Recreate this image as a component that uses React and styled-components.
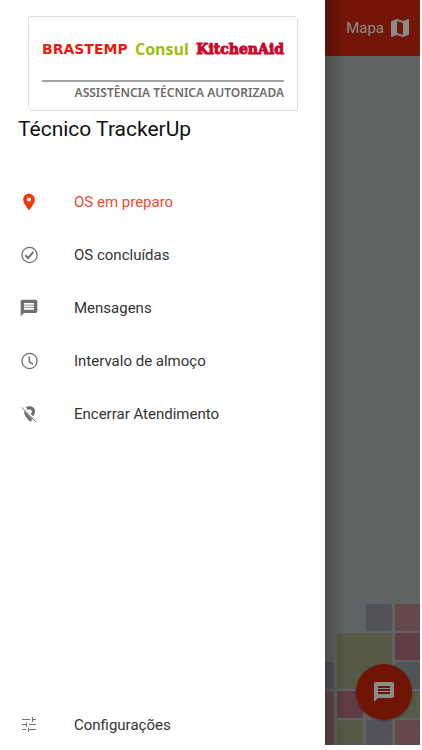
import React from "react";
import styled, { createGlobalStyle } from "styled-components";
import { MdLocationOn, MdMap, MdMessage } from "react-icons/md";

const GlobalStyle = createGlobalStyle`
  *, *::before, *::after { box-sizing: border-box; }
  body { margin: 0; background: #fff; font-family: Roboto, "Liberation Sans", sans-serif; }
`;

const Screen = styled.div`
  display: flex;
  min-height: 100vh;
  padding: 0 2px 5px 0;
  background: #fff;
`;

const Drawer = styled.aside`
  flex: 0 0 325px;
  display: flex;
  flex-direction: column;
  background: #fff;
`;

const Brands = styled.div`
  margin: 16px 27px 0 28px;
  padding: 22px 13px 8px;
  border: 1px solid #dcdcdc;
  border-radius: 2px 5px 2px 5px;
`;

const BrandRow = styled.div`
  display: flex;
  align-items: center;
  justify-content: space-between;
  height: 20px;
  white-space: nowrap;
`;

const Brastemp = styled.span`
  font: 700 14px/20px "DejaVu Sans", sans-serif;
  color: #e8190f;
`;

const Consul = styled.span`
  font: 700 16px/20px "Open Sans", sans-serif;
  color: #9abf0b;
`;

const KitchenAid = styled.span`
  font: 700 14px/20px "DejaVu Serif", serif;
  color: #c9082c;
  -webkit-text-stroke: 1px #c9082c;
`;

const Tagline = styled.p`
  margin: 21px 0 0;
  padding-top: 2px;
  border-top: 2px solid #a2a2a2;
  text-align: right;
  white-space: nowrap;
  font: 600 12px/18px "Noto Sans", sans-serif;
  color: #6c6c6c;
`;

const UserName = styled.h1`
  margin: 6px 18px 0;
  font-size: 21px;
  line-height: 24px;
  font-weight: 400;
  color: #111;
`;

const Menu = styled.nav`
  flex: 1;
  display: flex;
  flex-direction: column;
  margin-top: 34px;
`;

const MenuLink = styled.a`
  display: flex;
  align-items: center;
  gap: 35px;
  height: 53px;
  padding-left: 19px;
  font-size: 15px;
  line-height: 20px;
  text-decoration: none;
  color: ${(p) => (p.$active ? "#ee4a2c" : "#333")};

  svg {
    flex: none;
    color: ${(p) => (p.$active ? "#f5350a" : "#707070")};
  }

  &:last-child {
    margin-top: auto;
    margin-bottom: -6px;
  }
`;

const Scene = styled.main`
  position: relative;
  flex: 1;
  min-width: 0;
  display: flex;
  flex-direction: column;
  overflow: hidden;
  background: #606364;

  &::after {
    content: "";
    position: absolute;
    inset: 0;
    pointer-events: none;
    background: linear-gradient(to right, rgba(0, 0, 0, 0.24), transparent 20px);
  }
`;

const TopBar = styled.header`
  display: flex;
  justify-content: flex-end;
  height: 56px;
  padding-right: 8px;
  background: #741607;
`;

const MapButton = styled.button`
  display: flex;
  align-items: center;
  gap: 4px;
  padding: 0;
  border: 0;
  background: none;
  color: #8c8c8c;
  font: 400 15px/20px Roboto, sans-serif;
`;

const Mosaic = styled.div`
  display: grid;
  grid-template-columns: 9px 26px 26px 25px;
  grid-template-rows: 27px 27px 27px 27px 25px;
  gap: 2px 3px;
  justify-content: end;
  margin-top: auto;
`;

const Tile = styled.span`
  grid-area: ${(p) => p.$area};
  border-radius: 2px;
  background: ${(p) => p.$color};
`;

const ChatButton = styled.button`
  position: absolute;
  right: 8px;
  bottom: 25px;
  display: grid;
  place-items: center;
  width: 56px;
  height: 56px;
  padding: 0;
  border: 0;
  border-radius: 50%;
  background: #701505;
  color: #8c8c8c;
  box-shadow: 0 1px 3px rgba(0, 0, 0, 0.3);
`;

const slate = "#515358";
const olive = "#565a46";
const rose = "#64484a";
const wine = "#603c44";

const tiles = [
  ["1 / 3", slate],
  ["1 / 4", rose],
  ["2 / 2 / 4 / 4", olive],
  ["2 / 4", wine],
  ["3 / 1", slate],
  ["3 / 4", slate],
  ["4 / 1 / 6 / 2", rose],
  ["4 / 2", wine],
  ["4 / 4", olive],
  ["5 / 2", olive],
  ["5 / 3", slate],
  ["5 / 4", rose],
];

function LineIcon({ children }) {
  return (
    <svg width="20" height="20" viewBox="0 0 20 20" fill="none" stroke="currentColor" aria-hidden="true">
      {children}
    </svg>
  );
}

const CheckIcon = () => (
  <LineIcon>
    <circle cx="10.5" cy="10" r="7.6" strokeWidth="1.3" />
    <path d="M6.2 10.2 9 13l5.4-6" strokeWidth="1.9" />
  </LineIcon>
);

const ClockIcon = () => (
  <LineIcon>
    <circle cx="10.5" cy="10" r="7.6" strokeWidth="1.3" />
    <path d="M10.3 5.5v5.2l3.6 2.6" strokeWidth="1.5" />
  </LineIcon>
);

const PinOffIcon = () => (
  <LineIcon>
    <path
      d="M6.8 3.2C11 .8 16 3 16 7.2c0 2-.8 3.7-1.8 5.200l-2.500-2.600c1.700-1.100 1.500-3.700-.7-4.200-1-.2-1.700 0-2.300.5Z"
      fill="currentColor"
      stroke="none"
    />
    <path d="M5.3 6.8 13.4 15.2 11.4 18C8.3 14.8 4.3 10.8 5.3 6.8Z" fill="currentColor" stroke="none" />
    <path d="M3 3.5 17 18" strokeWidth="1" />
  </LineIcon>
);

const SlidersIcon = () => (
  <LineIcon>
    <path
      d="M3 4.5h8M13.5 2v5M13.5 4.5H17M3 9.5h4M7.5 7.5v4.5M10 9.5h7M3 14.5h4M9.5 12.5V17M9.5 14.5H17"
      strokeWidth="1"
    />
  </LineIcon>
);

const items = [
  { label: "OS em preparo", icon: <MdLocationOn size={20} />, active: true },
  { label: "OS concluídas", icon: <CheckIcon /> },
  { label: "Mensagens", icon: <MdMessage size={20} /> },
  { label: "Intervalo de almoço", icon: <ClockIcon /> },
  { label: "Encerrar Atendimento", icon: <PinOffIcon /> },
  { label: "Configurações", icon: <SlidersIcon /> },
];

export default function App() {
  return (
    <>
      <GlobalStyle />
      <Screen>
        <Drawer>
          <Brands>
            <BrandRow>
              <Brastemp>BRASTEMP</Brastemp>
              <Consul>Consul</Consul>
              <KitchenAid>KitchenAid</KitchenAid>
            </BrandRow>
            <Tagline>ASSISTÊNCIA TÉCNICA AUTORIZADA</Tagline>
          </Brands>
          <UserName>Técnico TrackerUp</UserName>
          <Menu>
            {items.map((item) => (
              <MenuLink key={item.label} href="#" $active={item.active}>
                {item.icon}
                {item.label}
              </MenuLink>
            ))}
          </Menu>
        </Drawer>
        <Scene>
          <TopBar>
            <MapButton type="button">
              Mapa
              <MdMap size={24} />
            </MapButton>
          </TopBar>
          <Mosaic>
            {tiles.map(([area, color]) => (
              <Tile key={area} $area={area} $color={color} />
            ))}
          </Mosaic>
          <ChatButton type="button" aria-label="Mensagens">
            <MdMessage size={24} />
          </ChatButton>
        </Scene>
      </Screen>
    </>
  );
}
